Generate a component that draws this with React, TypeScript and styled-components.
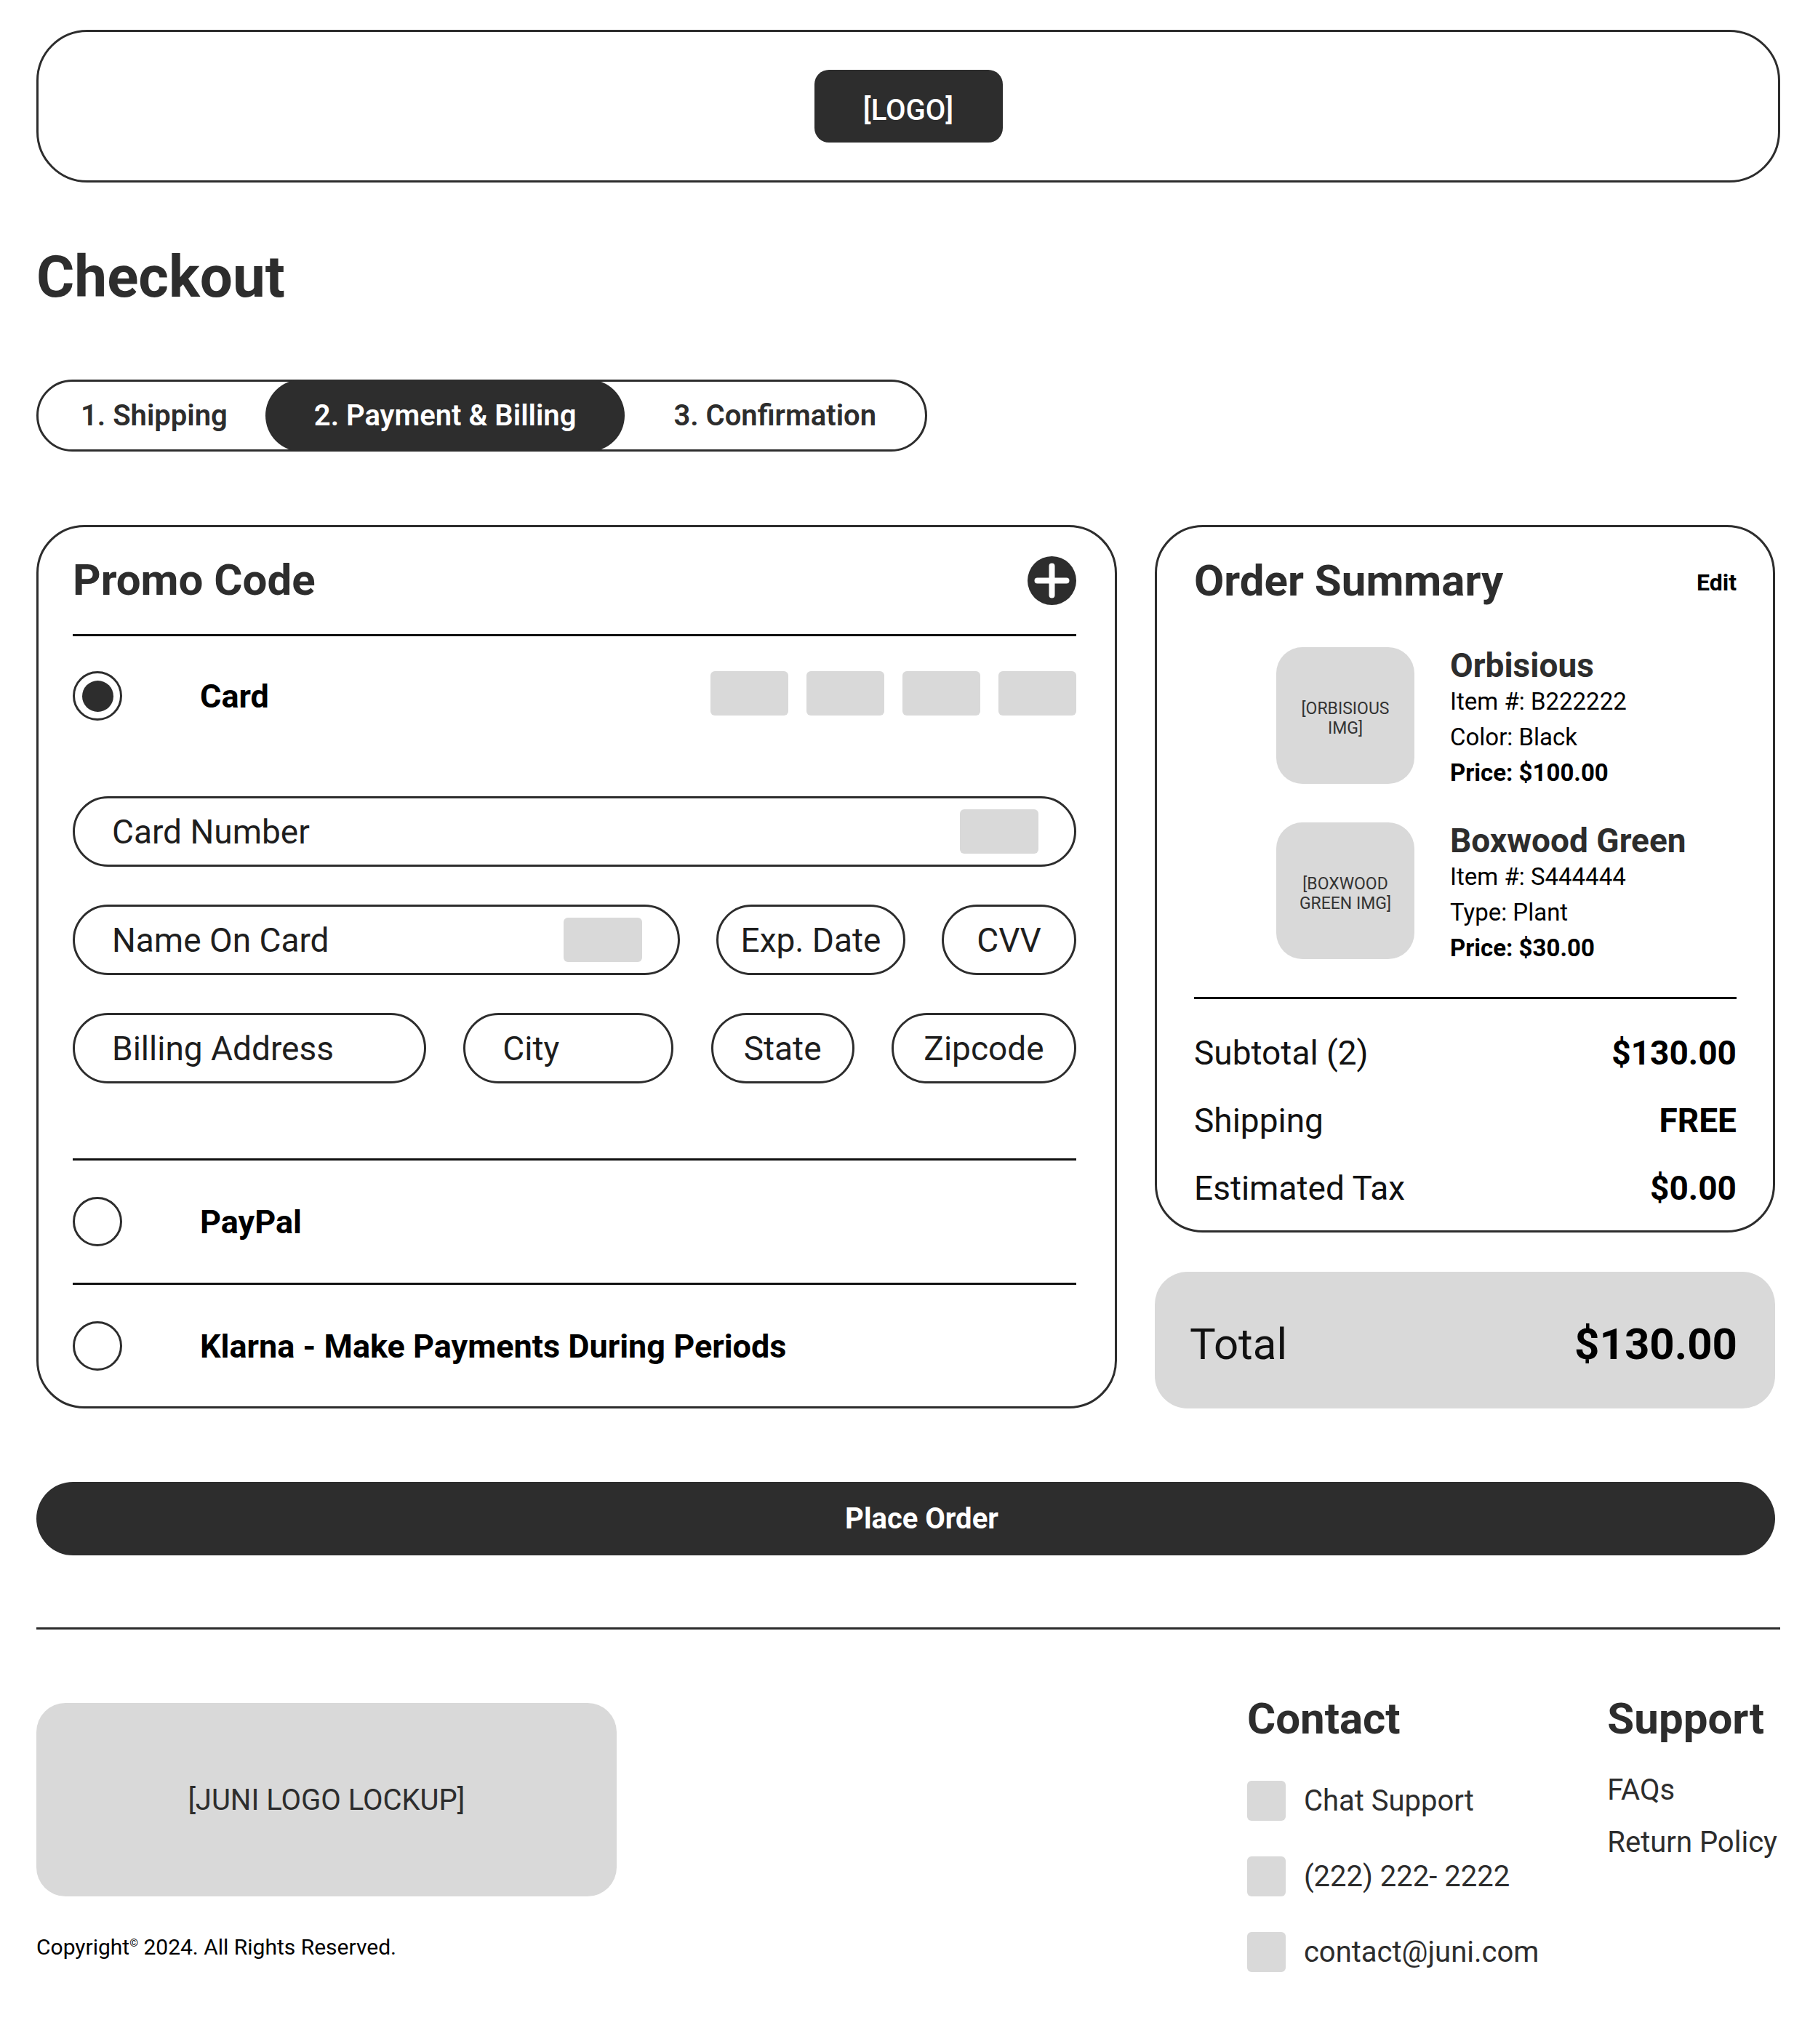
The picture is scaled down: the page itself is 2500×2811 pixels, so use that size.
import React from 'react';
import styled, { createGlobalStyle } from 'styled-components';

const GlobalStyle = createGlobalStyle`
  * {
    box-sizing: border-box;
  }
  body {
    margin: 0;
    background: #ffffff;
    font-family: Roboto, 'Liberation Sans', sans-serif;
    color: #2d2d2d;
  }
`;

const Page = styled.div`
  width: 100%;
  padding: 41px 52px 0 50px;
`;

const Header = styled.header`
  height: 210px;
  border: 3px solid #2d2d2d;
  border-radius: 70px;
  display: flex;
  align-items: center;
  justify-content: center;
`;

const Logo = styled.div`
  width: 259px;
  height: 100px;
  padding-top: 10px;
  background: #2d2d2d;
  border-radius: 20px;
  color: #ffffff;
  display: flex;
  align-items: center;
  justify-content: center;
  font-size: 40px;
  font-weight: 500;
`;

const Title = styled.h1`
  margin: 82px 0 0;
  font-size: 80px;
  line-height: 96px;
  font-weight: 700;
  color: #2d2d2d;
`;

const Steps = styled.div`
  margin-top: 93px;
  display: flex;
  width: fit-content;
  height: 99px;
  border: 3px solid #2d2d2d;
  border-radius: 999px;
`;

const Step = styled.div<{ $active?: boolean }>`
  display: flex;
  align-items: center;
  padding: 0 67px;
  margin: ${(p) => (p.$active ? '-3px 0' : '0')};
  border-radius: 999px;
  background: ${(p) => (p.$active ? '#2d2d2d' : 'transparent')};
  color: ${(p) => (p.$active ? '#ffffff' : '#2d2d2d')};
  font-size: 40px;
  font-weight: 600;
  white-space: nowrap;

  &:first-child {
    padding: 0 52px 0 58px;
  }
`;

const Main = styled.div`
  margin-top: 101px;
  margin-right: 7px;
  display: grid;
  grid-template-columns: 1486px 1fr;
  gap: 52px;
`;

const PaymentCard = styled.section`
  border: 3px solid #2d2d2d;
  border-radius: 66px;
  padding: 0 53px 0 47px;
`;

const CardHeader = styled.div`
  padding-top: 39px;
  display: flex;
  align-items: center;
  justify-content: space-between;
`;

const CardTitle = styled.h2`
  margin: 0;
  font-size: 60px;
  line-height: 68px;
  font-weight: 700;
  color: #2d2d2d;
`;

const Rule = styled.div<{ $top?: number }>`
  height: 3px;
  background: #111111;
  margin-top: ${(p) => p.$top ?? 0}px;
`;

const OptionBlock = styled.div<{ $pad: string }>`
  padding: ${(p) => p.$pad};
`;

const OptionRow = styled.div`
  display: flex;
  align-items: center;
`;

const Radio = styled.div`
  width: 68px;
  height: 68px;
  flex: none;
  border: 3px solid #2d2d2d;
  border-radius: 50%;
  display: flex;
  align-items: center;
  justify-content: center;
`;

const RadioDot = styled.div`
  width: 43px;
  height: 43px;
  border-radius: 50%;
  background: #2d2d2d;
`;

const OptionLabel = styled.span`
  margin-left: 107px;
  font-size: 45px;
  font-weight: 700;
  color: #000000;
`;

const Brands = styled.div`
  margin-left: auto;
  align-self: flex-start;
  display: flex;
  gap: 25px;
`;

const Swatch = styled.div<{ $w: number; $h: number }>`
  width: ${(p) => p.$w}px;
  height: ${(p) => p.$h}px;
  flex: none;
  background: #d9d9d9;
  border-radius: 6px;
`;

const Fields = styled.div`
  margin-top: 104px;
  display: flex;
  flex-direction: column;
  gap: 52px;
`;

const FieldRow = styled.div`
  display: flex;
  justify-content: space-between;
`;

const Field = styled.div<{ $w?: number; $center?: boolean }>`
  width: ${(p) => (p.$w ? `${p.$w}px` : '100%')};
  height: 97px;
  border: 3px solid #2d2d2d;
  border-radius: 999px;
  display: flex;
  align-items: center;
  justify-content: ${(p) => (p.$center ? 'center' : 'space-between')};
  padding: ${(p) => (p.$center ? '0' : '0 49px 0 51px')};
  font-size: 46px;
  color: #1e1e1e;
  white-space: nowrap;
`;

const SideColumn = styled.div`
  display: flex;
  flex-direction: column;
  gap: 54px;
`;

const SummaryCard = styled.section`
  flex: 1;
  border: 3px solid #2d2d2d;
  border-radius: 66px;
  padding: 40px 50px 30px 51px;
`;

const SummaryHead = styled.div`
  display: flex;
  align-items: center;
  justify-content: space-between;
`;

const EditLink = styled.span`
  font-size: 32px;
  font-weight: 700;
  color: #000000;
  padding-top: 4px;
`;

const Products = styled.div`
  margin-top: 57px;
  padding-left: 113px;
  display: flex;
  flex-direction: column;
  gap: 44px;
`;

const Product = styled.div`
  display: flex;
  align-items: flex-start;
  gap: 49px;
`;

const ProductImage = styled.div`
  width: 190px;
  height: 188px;
  flex: none;
  padding-top: 8px;
  border-radius: 36px;
  background: #d9d9d9;
  display: flex;
  align-items: center;
  justify-content: center;
  text-align: center;
  font-size: 23px;
  line-height: 27px;
  color: #333333;
`;

const ProductInfo = styled.div`
  display: flex;
  flex-direction: column;
`;

const ProductName = styled.div`
  font-size: 46px;
  line-height: 50px;
  font-weight: 700;
  color: #2d2d2d;
`;

const ProductLine = styled.div<{ $bold?: boolean }>`
  font-size: 33px;
  line-height: 49px;
  font-weight: ${(p) => (p.$bold ? 700 : 400)};
  color: #000000;
`;

const Totals = styled.div`
  margin-top: 46px;
  display: flex;
  flex-direction: column;
  gap: 37px;
`;

const TotalRow = styled.div`
  display: flex;
  justify-content: space-between;
  font-size: 46px;
  line-height: 56px;
  color: #111111;

  & > b {
    font-weight: 700;
    color: #000000;
  }
`;

const GrandTotal = styled.div`
  height: 188px;
  flex: none;
  border-radius: 45px;
  background: #d9d9d9;
  display: flex;
  align-items: center;
  justify-content: space-between;
  padding: 10px 52px 0 48px;
  font-size: 60px;
  color: #111111;

  & > b {
    font-weight: 700;
    color: #000000;
  }
`;

const PlaceOrder = styled.button`
  margin: 101px 7px 0 0;
  width: calc(100% - 7px);
  height: 101px;
  border: none;
  border-radius: 999px;
  background: #2d2d2d;
  color: #ffffff;
  font-family: inherit;
  font-size: 40px;
  font-weight: 700;
  display: flex;
  align-items: center;
  justify-content: center;
  padding: 0 0 0 44px;
  cursor: pointer;
`;

const FooterRule = styled.div`
  margin-top: 99px;
  height: 3px;
  background: #2d2d2d;
`;

const Footer = styled.footer`
  display: flex;
  justify-content: space-between;
  align-items: flex-start;
  padding: 89px 4px 99px 0;
`;

const Brand = styled.div`
  padding-top: 12px;
`;

const Lockup = styled.div`
  width: 798px;
  height: 266px;
  border-radius: 40px;
  background: #d9d9d9;
  display: flex;
  align-items: center;
  justify-content: center;
  font-size: 40px;
  color: #2d2d2d;
`;

const Copyright = styled.div`
  margin-top: 47px;
  font-size: 30px;
  line-height: 34px;
  color: #000000;

  & sup {
    font-size: 0.5em;
  }
`;

const FooterCols = styled.div`
  display: flex;
  gap: 94px;
`;

const FooterCol = styled.div`
  display: flex;
  flex-direction: column;
`;

const FooterList = styled.div<{ $top: number; $gap: number }>`
  margin-top: ${(p) => p.$top}px;
  display: flex;
  flex-direction: column;
  gap: ${(p) => p.$gap}px;
`;

const ContactItem = styled.div`
  display: flex;
  align-items: center;
  gap: 25px;
  height: 55px;
  font-size: 40px;
  color: #2d2d2d;
  white-space: nowrap;
`;

const FooterLink = styled.div`
  font-size: 40px;
  line-height: 48px;
  color: #2d2d2d;
  white-space: nowrap;
`;

const PlusIcon = () => (
  <svg width="67" height="67" viewBox="0 0 67 67">
    <circle cx="33.5" cy="33.5" r="33.5" fill="#2d2d2d" />
    <path d="M33.5 13.5v40M13.5 33.5h40" stroke="#ffffff" strokeWidth="8" strokeLinecap="round" />
  </svg>
);

const App: React.FC = () => {
  return (
    <>
      <GlobalStyle />
      <Page>
        <Header>
          <Logo>[LOGO]</Logo>
        </Header>

        <Title>Checkout</Title>

        <Steps>
          <Step>1. Shipping</Step>
          <Step $active>2. Payment &amp; Billing</Step>
          <Step>3. Confirmation</Step>
        </Steps>

        <Main>
          <PaymentCard>
            <CardHeader>
              <CardTitle>Promo Code</CardTitle>
              <PlusIcon />
            </CardHeader>
            <Rule $top={40} />

            <OptionBlock $pad="48px 0 103px">
              <OptionRow>
                <Radio>
                  <RadioDot />
                </Radio>
                <OptionLabel>Card</OptionLabel>
                <Brands>
                  <Swatch $w={107} $h={61} />
                  <Swatch $w={107} $h={61} />
                  <Swatch $w={107} $h={61} />
                  <Swatch $w={107} $h={61} />
                </Brands>
              </OptionRow>
              <Fields>
                <Field>
                  Card Number
                  <Swatch $w={108} $h={61} />
                </Field>
                <FieldRow>
                  <Field $w={835}>
                    Name On Card
                    <Swatch $w={108} $h={61} />
                  </Field>
                  <Field $w={260} $center>Exp. Date</Field>
                  <Field $w={185} $center>CVV</Field>
                </FieldRow>
                <FieldRow>
                  <Field $w={486}>Billing Address</Field>
                  <Field $w={289}>City</Field>
                  <Field $w={197} $center>State</Field>
                  <Field $w={254} $center>Zipcode</Field>
                </FieldRow>
              </Fields>
            </OptionBlock>
            <Rule />

            <OptionBlock $pad="50px 0">
              <OptionRow>
                <Radio />
                <OptionLabel>PayPal</OptionLabel>
              </OptionRow>
            </OptionBlock>
            <Rule />

            <OptionBlock $pad="50px 0 49px">
              <OptionRow>
                <Radio />
                <OptionLabel>Klarna - Make Payments During Periods</OptionLabel>
              </OptionRow>
            </OptionBlock>
          </PaymentCard>

          <SideColumn>
            <SummaryCard>
              <SummaryHead>
                <CardTitle>Order Summary</CardTitle>
                <EditLink>Edit</EditLink>
              </SummaryHead>
              <Products>
                <Product>
                  <ProductImage>
                    [ORBISIOUS
                    <br />
                    IMG]
                  </ProductImage>
                  <ProductInfo>
                    <ProductName>Orbisious</ProductName>
                    <ProductLine>Item #: B222222</ProductLine>
                    <ProductLine>Color: Black</ProductLine>
                    <ProductLine $bold>Price: $100.00</ProductLine>
                  </ProductInfo>
                </Product>
                <Product>
                  <ProductImage>
                    [BOXWOOD
                    <br />
                    GREEN IMG]
                  </ProductImage>
                  <ProductInfo>
                    <ProductName>Boxwood Green</ProductName>
                    <ProductLine>Item #: S444444</ProductLine>
                    <ProductLine>Type: Plant</ProductLine>
                    <ProductLine $bold>Price: $30.00</ProductLine>
                  </ProductInfo>
                </Product>
              </Products>
              <Rule $top={43} />
              <Totals>
                <TotalRow>
                  <span>Subtotal (2)</span>
                  <b>$130.00</b>
                </TotalRow>
                <TotalRow>
                  <span>Shipping</span>
                  <b>FREE</b>
                </TotalRow>
                <TotalRow>
                  <span>Estimated Tax</span>
                  <b>$0.00</b>
                </TotalRow>
              </Totals>
            </SummaryCard>
            <GrandTotal>
              <span>Total</span>
              <b>$130.00</b>
            </GrandTotal>
          </SideColumn>
        </Main>

        <PlaceOrder>Place Order</PlaceOrder>

        <FooterRule />

        <Footer>
          <Brand>
            <Lockup>[JUNI LOGO LOCKUP]</Lockup>
            <Copyright>
              Copyright<sup>©</sup> 2024. All Rights Reserved.
            </Copyright>
          </Brand>
          <FooterCols>
            <FooterCol>
              <CardTitle>Contact</CardTitle>
              <FooterList $top={51} $gap={49}>
                <ContactItem>
                  <Swatch $w={53} $h={55} />
                  Chat Support
                </ContactItem>
                <ContactItem>
                  <Swatch $w={53} $h={55} />
                  (222) 222- 2222
                </ContactItem>
                <ContactItem>
                  <Swatch $w={53} $h={55} />
                  contact@juni.com
                </ContactItem>
              </FooterList>
            </FooterCol>
            <FooterCol>
              <CardTitle>Support</CardTitle>
              <FooterList $top={40} $gap={24}>
                <FooterLink>FAQs</FooterLink>
                <FooterLink>Return Policy</FooterLink>
              </FooterList>
            </FooterCol>
          </FooterCols>
        </Footer>
      </Page>
    </>
  );
};

export default App;
